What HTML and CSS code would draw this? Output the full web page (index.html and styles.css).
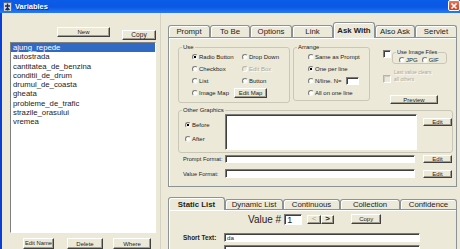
FILE: index.html
```html
<!DOCTYPE html>
<html>
<head>
<meta charset="utf-8">
<title>Variables</title>
<link rel="stylesheet" href="styles.css">
</head>
<body>
<div class="titlebar">
  <svg class="ticon" width="9" height="10" viewBox="0 0 9 10">
    <rect x="0.5" y="0.5" width="8" height="9" fill="#d8d8d0" stroke="#5a6a90"/>
    <path d="M4.5 1.5 V8.5 M2 4 H7 M2.5 8 L4.5 6 L6.5 8" stroke="#1a2a60" stroke-width="1.4" fill="none"/>
  </svg>
  <span class="title">Variables</span>
  <span class="close">
    <svg width="8" height="8" viewBox="0 0 8 8"><path d="M1.5 1.5 L6.5 6.5 M6.5 1.5 L1.5 6.5" stroke="#fff" stroke-width="1.6"/></svg>
  </span>
</div>
<div class="main">
  <div class="left">
    <div class="left-top">
      <div class="btn b-new">New</div>
      <div class="btn b-copy">Copy</div>
    </div>
    <ul class="list">
      <li class="sel">ajung_repede</li>
      <li>autostrada</li>
      <li>cantitatea_de_benzina</li>
      <li>conditii_de_drum</li>
      <li>drumul_de_coasta</li>
      <li>gheata</li>
      <li>probleme_de_trafic</li>
      <li>strazile_orasului</li>
      <li>vremea</li>
    </ul>
    <div class="left-bottom">
      <div class="btn b-editname">Edit Name</div>
      <div class="btn b-delete">Delete</div>
      <div class="btn b-where">Where</div>
    </div>
  </div>
  <div class="right">
    <div class="tabs tabs-top">
      <div class="tab t42">Prompt</div>
      <div class="tab t40">To Be</div>
      <div class="tab t42">Options</div>
      <div class="tab t41">Link</div>
      <div class="tab t42 active">Ask With</div>
      <div class="tab t40">Also Ask</div>
      <div class="tab t42">Servlet</div>
    </div>
    <div class="panel panel-top">
      <div class="row1">
        <div class="group g-use">
          <span class="legend">Use</span>
          <div class="use-grid">
            <div class="opt"><span class="radio on"></span>Radio Button</div>
            <div class="opt"><span class="radio"></span>Drop Down</div>
            <div class="opt"><span class="radio"></span>Checkbox</div>
            <div class="opt dis"><span class="radio off"></span>Edit Box</div>
            <div class="opt"><span class="radio"></span>List</div>
            <div class="opt"><span class="radio"></span>Button</div>
            <div class="opt"><span class="radio"></span>Image Map</div>
            <div class="btn b-editmap">Edit Map</div>
          </div>
        </div>
        <div class="group g-arrange">
          <span class="legend">Arrange</span>
          <div class="arr-grid">
            <div class="opt"><span class="radio"></span>Same as Prompt</div>
            <div class="opt"><span class="radio on"></span>One per line</div>
            <div class="opt"><span class="radio"></span>N/line. N=<span class="input nbox"></span></div>
            <div class="opt"><span class="radio"></span>All on one line</div>
          </div>
        </div>
        <div class="imgcol">
          <div class="img-row">
            <span class="check"></span>
            <div class="group g-img">
              <span class="legend">Use Image Files</span>
              <div class="img-opts">
                <div class="opt"><span class="radio"></span>JPG</div>
                <div class="opt gif"><span class="radio"></span>GIF</div>
              </div>
            </div>
          </div>
          <div class="lastval">
            <span class="check off"></span>
            <span class="lastval-text">Last value clears<br>all others</span>
          </div>
          <div class="btn b-preview">Preview</div>
        </div>
      </div>
      <div class="group g-other">
        <span class="legend">Other Graphics</span>
        <div class="other-body">
          <div class="other-radios">
            <div class="opt orow"><span class="radio on"></span>Before</div>
            <div class="opt orow"><span class="radio"></span>After</div>
          </div>
          <div class="input textarea"></div>
          <div class="btn b-edit b-edit-top">Edit</div>
        </div>
      </div>
      <div class="fmt-row">
        <span class="fmt-label">Prompt Format:</span>
        <span class="input fmt-input"></span>
        <div class="btn b-edit">Edit</div>
      </div>
      <div class="fmt-row fmt-row2">
        <span class="fmt-label">Value Format:</span>
        <span class="input fmt-input fmt-input2"></span>
        <div class="btn b-edit">Edit</div>
      </div>
    </div>
    <div class="tabs tabs-bottom">
      <div class="tab t57 active">Static List</div>
      <div class="tab t58">Dynamic List</div>
      <div class="tab t57">Continuous</div>
      <div class="tab t60">Collection</div>
      <div class="tab t57">Confidence</div>
    </div>
    <div class="panel panel-bottom">
      <div class="value-row">
        <span class="value-label">Value #</span>
        <span class="input value-input">1</span>
        <div class="btn b-arrow b-prev">&lt;</div>
        <div class="btn b-arrow b-next">&gt;</div>
        <div class="btn b-vcopy">Copy</div>
      </div>
      <div class="short-row">
        <span class="short-label">Short Text:</span>
        <span class="input short-input">da</span>
      </div>
      <div class="short-row short-row2">
        <span class="input short-input"></span>
      </div>
    </div>
  </div>
</div>
</body>
</html>
```

FILE: styles.css
```css
* { box-sizing: border-box; margin: 0; padding: 0; }

html, body {
  width: 460px;
  height: 249px;
  overflow: hidden;
}

body {
  background: #ECE9D8;
  font-family: "Liberation Sans", Arial, sans-serif;
  font-size: 6px;
  color: #1c1c1c;
}

/* ---------- title bar ---------- */
.titlebar {
  height: 13px;
  display: flex;
  align-items: center;
  padding-left: 3px;
  background: linear-gradient(#0B5CE6, #0A58E4 55%, #2A7AF3);
}

.ticon { flex: none; }

.title {
  margin-left: 3px;
  color: #fff;
  font-weight: bold;
  font-size: 7.5px;
  text-shadow: 1px 1px #0A2F8C;
}

.close {
  margin-left: auto;
  align-self: flex-start;
  width: 12px;
  height: 11px;
  background: linear-gradient(#E9775A, #D2401C);
  border: 1px solid #fff;
  border-radius: 2px;
  display: flex;
  align-items: center;
  justify-content: center;
}

/* ---------- main ---------- */
.main {
  height: 236px;
  display: flex;
  border-left: 2px solid #0A3FD6;
}

.left {
  width: 158px;
  flex: none;
  display: flex;
  flex-direction: column;
}

.btn {
  display: flex;
  align-items: center;
  justify-content: center;
  flex: none;
  background: #ECE9D8;
  border: 1px solid;
  border-color: #fff #404040 #404040 #fff;
  box-shadow: inset -1px -1px #A09D90;
  font-size: 6px;
  line-height: 1;
  white-space: nowrap;
}

.left-top {
  height: 29px;
  display: flex;
  align-items: flex-start;
}

.b-new { margin: 14px 0 0 55px; width: 53px; height: 10px; }
.b-copy { margin: 17px 0 0 12px; width: 34px; height: 10px; font-size: 6.6px; }

.list {
  margin-left: 8px;
  width: 146px;
  height: 191px;
  list-style: none;
  background: #fff;
  border: 1px solid;
  border-color: #808080 #fff #fff #808080;
  font-size: 7.75px;
}

.list li {
  height: 9.3px;
  line-height: 9.3px;
  padding-left: 2px;
  white-space: nowrap;
}

.list li.sel {
  background: #316AC5;
  color: #fff;
}

.left-bottom {
  display: flex;
  padding-top: 5px;
}

.b-editname { margin-left: 21px; width: 31px; height: 11px; font-size: 5.8px; }
.b-delete { margin-left: 13px; width: 36px; height: 11px; }
.b-where { margin-left: 10px; width: 38px; height: 11px; }

/* ---------- right side ---------- */
.right {
  flex: 1;
  border-left: 1px solid #D6D2C2;
  padding-left: 7px;
}

.tabs {
  display: flex;
  align-items: flex-end;
  width: 289px;
}

.tab {
  flex: none;
  height: 12px;
  border: 1px solid #8C9394;
  border-bottom: none;
  border-radius: 3px 3px 0 0;
  background: #ECE9D8;
  box-shadow: inset 1px 1px #fff;
  font-size: 7.8px;
  display: flex;
  align-items: center;
  justify-content: center;
  white-space: nowrap;
}

.tab.active {
  position: relative;
  z-index: 1;
  height: 16px;
  margin-bottom: -1px;
  font-weight: bold;
}

.t40 { width: 40px; }
.t41 { width: 41px; }
.t42 { width: 42px; }
.t57 { width: 57px; }
.t58 { width: 58px; }
.t60 { width: 60px; }

.tabs-top { margin-top: 9px; height: 15px; }

.panel {
  width: 289px;
  background: #ECE9D8;
  border: 1px solid #8C9394;
  box-shadow: inset 1px 1px #fff;
}

.panel-top { height: 150px; }

.row1 {
  display: flex;
  align-items: flex-start;
  height: 56px;
  margin-top: 9px;
  padding-left: 9px;
}

.group {
  flex: none;
  border: 1px solid #C9C7B8;
  border-radius: 3px;
}

.legend {
  display: block;
  width: max-content;
  height: 8px;
  line-height: 8px;
  margin: -5px 0 0 3px;
  padding: 0 1px;
  background: #ECE9D8;
  white-space: nowrap;
}

.opt {
  display: flex;
  align-items: center;
  gap: 1px;
  white-space: nowrap;
}

.opt.dis { color: #ACA899; text-shadow: 1px 1px #fff; }

.radio {
  flex: none;
  width: 6px;
  height: 6px;
  border-radius: 50%;
  border: 1px solid;
  border-color: #7A7A7A #F4F4F0 #F4F4F0 #7A7A7A;
  background: #fff;
}

.radio.on { background: radial-gradient(circle, #000 0 1.2px, #fff 1.6px); }
.radio.off { background: #ECE9D8; border-color: #B8B5A8 #fff #fff #B8B5A8; }

.check {
  flex: none;
  width: 8px;
  height: 8px;
  border: 1px solid;
  border-color: #808080 #fff #fff #808080;
  box-shadow: inset 1px 1px #404040;
  background: #fff;
}

.check.off {
  background: #ECE9D8;
  border-color: #B8B5A8 #fff #fff #B8B5A8;
  box-shadow: inset 1px 1px #D0CDBF;
}

.input {
  display: block;
  flex: none;
  background: #fff;
  border: 1px solid;
  border-color: #7A7A7A #fff #fff #7A7A7A;
  box-shadow: inset 1px 1px #404040;
}

/* Use group */
.g-use { width: 112px; height: 56px; }

.use-grid {
  display: grid;
  grid-template-columns: 50px 1fr;
  grid-auto-rows: 12px;
  align-items: center;
  padding-left: 13px;
}

.b-editmap { margin-left: -8px; width: 33px; height: 10px; }

/* Arrange group */
.g-arrange { margin-left: 3px; width: 77px; height: 54px; }

.arr-grid {
  display: grid;
  grid-auto-rows: 12px;
  align-items: center;
  padding-left: 14px;
}

.nbox { width: 13px; height: 8px; margin-left: 3px; }

/* Image column */
.imgcol {
  margin-left: 13px;
  width: 70px;
  display: flex;
  flex-direction: column;
  align-items: flex-start;
}

.img-row { display: flex; align-items: flex-start; }
.img-row .check { margin-top: 3px; }

.g-img { margin: 5px 0 0 1px; width: 55px; height: 12px; }
.g-img .legend { margin-left: 3px; font-size: 5.6px; }

.img-opts {
  display: flex;
  align-items: center;
  height: 7px;
  padding-left: 6px;
}

.gif { margin-left: 4px; }

.lastval {
  display: flex;
  align-items: flex-start;
  margin-top: 5px;
}

.lastval .check { margin-top: 6px; }

.lastval-text {
  margin-left: 3px;
  font-size: 5px;
  line-height: 7px;
  color: #ACA899;
  text-shadow: 1px 1px #fff;
  white-space: nowrap;
}

.b-preview { margin: 12px 0 0 7px; width: 48px; height: 9px; }

/* Other Graphics */
.g-other { margin: 7px 0 0 9px; width: 275px; height: 43px; }

.other-body { display: flex; align-items: flex-start; }

.other-radios {
  width: 46px;
  flex: none;
  padding: 4px 0 0 6px;
}

.orow { height: 14px; }

.textarea { width: 192px; height: 36px; }

.b-edit { width: 29px; height: 8px; margin-left: 6px; }
.b-edit-top { margin-top: 4px; }

.fmt-row {
  display: flex;
  align-items: center;
  margin-top: 2px;
  padding-left: 14px;
  height: 8px;
}

.fmt-row .b-edit { margin-left: 8px; }

.fmt-row2 { margin-top: 6px; height: 9px; }

.fmt-label { width: 42px; flex: none; white-space: nowrap; font-size: 5.7px; }

.fmt-input { width: 190px; height: 8px; }
.fmt-input2 { height: 9px; }

/* bottom tabs */
.tabs-bottom { margin-top: 10px; height: 12px; }
.tabs-bottom .tab { height: 10px; }
.tabs-bottom .tab.active { height: 13px; }

.panel-bottom { height: 41px; overflow: hidden; }

.value-row {
  display: flex;
  align-items: center;
  height: 12px;
  margin-top: 3px;
}

.value-label {
  margin-left: 79px;
  font-size: 10px;
  white-space: nowrap;
}

.value-input {
  margin-left: 3px;
  width: 18px;
  height: 11px;
  font-size: 9px;
  line-height: 10px;
  padding-left: 2px;
}

.b-arrow { width: 14px; height: 9px; font-size: 8px; }
.b-prev { margin-left: 5px; color: #ACA899; }
.b-next { width: 13px; font-weight: bold; }

.b-vcopy { margin-left: 17px; width: 30px; height: 10px; }

.short-row {
  display: flex;
  align-items: center;
  margin-top: 8px;
  padding-left: 14px;
}

.short-row2 { margin-top: 3px; padding-left: 55px; }

.short-label {
  width: 41px;
  flex: none;
  font-weight: bold;
  font-size: 6.4px;
  white-space: nowrap;
}

.short-input {
  width: 196px;
  height: 9px;
  font-size: 6.2px;
  line-height: 8px;
  padding-left: 2px;
}
```
